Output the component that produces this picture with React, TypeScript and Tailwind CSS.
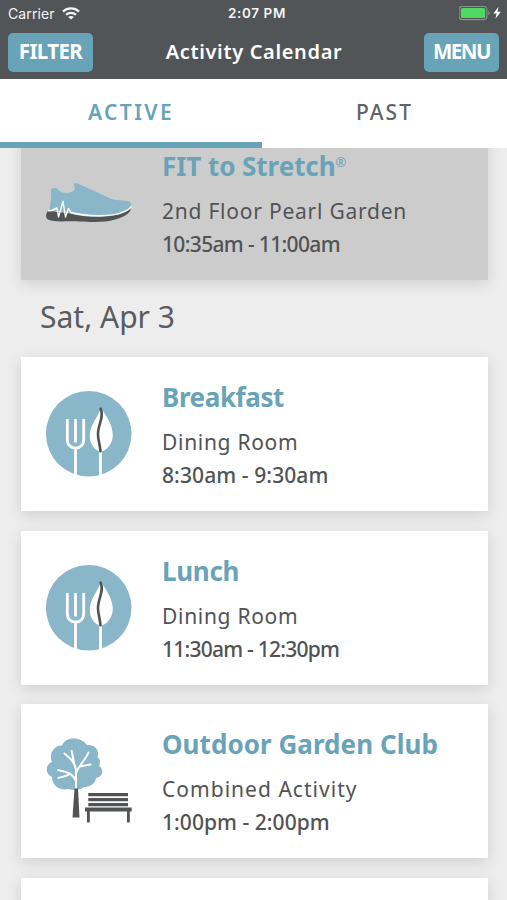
import { useState } from 'react';
import clsx from 'clsx';

function WifiIcon() {
  return (
    <svg viewBox="0 0 18 13" className="h-[13px] w-[18px]" fill="none" stroke="#f4f4f4" strokeWidth="2.2">
      <path d="M1 4.6 C5.4 0.4 12.6 0.4 17 4.6" />
      <path d="M4 7.8 C6.8 5.1 11.2 5.1 14 7.8" />
      <path d="M9 12.5 L6.1 9.9 C7.6 8.6 10.4 8.6 11.9 9.9 Z" fill="#f4f4f4" stroke="none" />
    </svg>
  );
}

function BatteryIcon() {
  return (
    <svg viewBox="0 0 44 15" className="h-[15px] w-[44px]">
      <rect x="0.1" y="0.4" width="27.8" height="13.2" rx="3" fill="none" stroke="#8d8f90" strokeWidth="1.1" />
      <rect x="1.8" y="2" width="24.4" height="10" rx="1.5" fill="#4cd964" />
      <path d="M29.3 4.7 C31.1 5.5 31.1 8.5 29.3 9.3 Z" fill="#8d8f90" />
      <path d="M39.6 0.8 L34.4 7.6 H37.6 L36.4 12.8 L41.8 5.8 H38.4 Z" fill="#fff" />
    </svg>
  );
}

function ShoeIcon() {
  return (
    <svg viewBox="0 0 110 65" className="h-[65px] w-[110px]">
      <path
        d="M20 40 C19 36 22 31 21 22 C20 18 24 17.5 27 18.5 C31 24 40 24.5 44.5 20 C45.5 17.5 43 15.5 44 13.5 C46 12 49 14 51 15 L75 26 C83 31 91 30 98 31 C101 32 102 35 101 37.5 C92 45 80 46 70 46 C58 46 48 44 40 42.5 Z"
        fill="#8ab6ca"
      />
      <path
        d="M18 41 C22 41 24 41 27 42 L38 43 C50 46 60 47 70 47 C85 46 94 44 101 38.5 C100 44 93 47 87 49 C75 53 60 52 50 51.5 C38 50.5 26 53 18 49.5 C15 47.5 16 43 18 41 Z"
        fill="#515355"
      />
      <path
        d="M18 40.5 C21 41 23 40.5 24.5 39 L27 38 L28.5 47 L33 31.5 L35.5 47 L38.5 38.5 L41 42.5 C55 46.5 84 47 93 42 C97 40.5 100 38.5 101.5 36"
        fill="none"
        stroke="#fff"
        strokeWidth="1.4"
        strokeLinejoin="round"
      />
    </svg>
  );
}

function DiningIcon() {
  return (
    <svg viewBox="0 0 110 110" className="h-[110px] w-[110px]">
      <circle cx="53.7" cy="53.8" r="42.8" fill="#8ab6ca" />
      <path
        d="M32.3 39 V59.5 C32.3 71 48.7 71 48.7 59.5 V39 M40.5 39 V62.5 M40.5 68 V95 M65.5 70 V95"
        fill="none"
        stroke="#fff"
        strokeWidth="2.8"
      />
      <path d="M65.8 28 C71 35 77.8 45 77.8 55 C77.8 65 70 71.5 65.8 71.5 C61 71.5 54.8 65 54.8 56 C54.8 45 62 39 65.8 28 Z" fill="#fff" />
      <path
        d="M65.6 28.6 C69.5 37 63 44 63 54 C63 61 65 64 65.5 71.3"
        fill="none"
        stroke="#515355"
        strokeWidth="2.6"
        strokeLinecap="round"
      />
    </svg>
  );
}

function ParkIcon() {
  return (
    <svg viewBox="0 0 110 100" className="h-[100px] w-[110px]">
      <path
        d="M27 15.5 C30 7 45 5.5 52 15 C60 14 65 21 62.5 27 C66 30 65 34 64 36 C70 40 67 47 61 48 C60 55 53 57 49 57 C44 61 36 60 33 59 C25 61 17 56 17 47 C9 43 11 34 17 32 C13 23 20 15 27 15.5 Z"
        fill="#8ab6ca"
      />
      <path
        d="M41 60 V40 C40 32 35 28 29.5 23.5 M36.7 21 L39.3 34 M41 43 C45 34 51 29 53.5 22.5 M44.5 36.5 C49 36 52 35 55.5 34.5 M41 51 C38 43 31 42 23 40 M34.5 44 C31 47 27 46.5 23.5 48"
        fill="none"
        stroke="#fff"
        strokeWidth="2"
        strokeLinecap="round"
      />
      <path d="M39.5 58.5 H43 L44.5 87.5 H37.5 Z" fill="#515355" />
      <path
        d="M53.3 63 H93 V66.2 H53.3 Z M53.3 68 H93 V71.2 H53.3 Z M53.3 73 H93 V76.2 H53.3 Z M50 77.6 H96.7 V81.6 H50 Z M52 81 H54.8 V92.5 H52 Z M92 81 H94.8 V92.5 H92 Z"
        fill="#515355"
      />
    </svg>
  );
}

const pastEvent = {
  title: 'FIT to Stretch',
  registered: true,
  location: '2nd Floor Pearl Garden',
  time: '10:35am - 11:00am',
  icon: ShoeIcon,
  iconClass: 'pl-[9.5px] pt-[44px]',
  titleClass: 'tracking-[-0.05px]',
  locationClass: 'tracking-[0.77px]',
  timeClass: 'tracking-[-0.65px]',
};

const events = [
  {
    title: 'Breakfast',
    location: 'Dining Room',
    time: '8:30am - 9:30am',
    icon: DiningIcon,
    iconClass: 'pl-[14.5px] pt-[23px]',
    titleClass: 'tracking-[-0.4px]',
    locationClass: 'tracking-[0.7px]',
    timeClass: 'tracking-[0.1px]',
  },
  {
    title: 'Lunch',
    location: 'Dining Room',
    time: '11:30am - 12:30pm',
    icon: DiningIcon,
    iconClass: 'pl-[14.5px] pt-[23px]',
    titleClass: 'tracking-[-0.3px]',
    locationClass: 'tracking-[0.7px]',
    timeClass: 'tracking-[-0.75px]',
  },
  {
    title: 'Outdoor Garden Club',
    location: 'Combined Activity',
    time: '1:00pm - 2:00pm',
    icon: ParkIcon,
    iconClass: 'pl-[14.5px] pt-[26px]',
    titleClass: 'tracking-[0.05px]',
    locationClass: 'tracking-[1.03px]',
    timeClass: 'tracking-[0.05px]',
  },
];

function EventCard({ event, past = false }: { event: any; past?: boolean }) {
  return (
    <div
      className={clsx(
        'flex h-[154px] w-[467px] shrink-0 shadow-[0_4px_14px_rgba(0,0,0,0.12)]',
        past ? 'bg-[#cccccc]' : 'bg-white'
      )}
    >
      <div className={clsx('w-[141.5px] shrink-0', event.iconClass)}>
        <event.icon />
      </div>
      <div className="whitespace-nowrap pt-[22px] text-[#515355]">
        <h3 className={clsx('text-[26px] font-bold leading-[36px] text-[#68a3b8]', event.titleClass)}>
          {event.title}
          {event.registered && <sup className="top-[-9px] text-[13px] font-normal">®</sup>}
        </h3>
        <p className={clsx('mt-[11px] text-[21px] leading-[32px]', event.locationClass)}>{event.location}</p>
        <p className={clsx('mt-[1px] text-[21px] font-medium leading-[32px]', event.timeClass)}>{event.time}</p>
      </div>
    </div>
  );
}

export default function App() {
  const [activeTab, setActiveTab] = useState('active');

  return (
    <div className="flex h-[900px] w-[507px] flex-col overflow-hidden bg-[#ededed] font-['Noto_Sans',sans-serif]">
      <header className="h-[79px] shrink-0 bg-[#515558] text-white">
        {/* Status bar */}
        <div className="grid h-[27px] grid-cols-3 items-center pl-[8px] pr-[4px] font-['Inter',sans-serif] text-[13px] text-[#f4f4f4]">
          <div className="flex items-center gap-[7px]">
            <span className="text-[14px] tracking-[0.1px]">Carrier</span>
            <WifiIcon />
          </div>
          <span className="pl-[3px] text-center text-[13.5px] font-semibold tracking-[0.6px]">2:07 PM</span>
          <div className="flex justify-end">
            <BatteryIcon />
          </div>
        </div>
        {/* Title bar */}
        <div className="flex items-center justify-between px-[8px] pt-[6px]">
          <button className="h-[39px] w-[85px] rounded-[5px] bg-[#68a3b8] pb-[3px] text-[20.5px] font-bold leading-[36px] tracking-[-0.6px]">
            FILTER
          </button>
          <h1 className="mr-[9px] pb-[2px] text-[20px] font-semibold tracking-[0.65px]">Activity Calendar</h1>
          <button className="h-[39px] w-[75px] rounded-[5px] bg-[#68a3b8] pb-[3px] text-[20.5px] font-bold leading-[36px] tracking-[-1.5px]">
            MENU
          </button>
        </div>
      </header>

      <nav className="z-10 flex h-[69px] shrink-0 bg-white text-[21px] font-medium">
        <button
          onClick={() => setActiveTab('active')}
          className={clsx(
            'w-[262px] border-b-[6px] pt-[4px] font-semibold tracking-[2.4px]',
            activeTab === 'active' ? 'border-[#68a3b8] text-[#68a3b8]' : 'border-transparent text-[#606264]'
          )}
        >
          ACTIVE
        </button>
        <button
          onClick={() => setActiveTab('past')}
          className={clsx(
            'flex-1 border-b-[6px] pt-[4px] tracking-[2px]',
            activeTab === 'past' ? 'border-[#68a3b8] text-[#68a3b8]' : 'border-transparent text-[#606264]'
          )}
        >
          PAST
        </button>
      </nav>

      <main className="flex-1 overflow-hidden pl-[20.5px]">
        <div className="-mt-[22px]">
          <EventCard event={pastEvent} past />
        </div>
        <h2 className="h-[77px] pl-[19.5px] pt-[17px] text-[30px] font-normal leading-[40px] text-[#5a5c5e]">
          Sat, Apr 3
        </h2>
        <div className="flex flex-col gap-[19.5px]">
          {events.map((event) => (
            <EventCard key={event.title} event={event} />
          ))}
          <div className="h-[154px] w-[467px] bg-white shadow-[0_4px_14px_rgba(0,0,0,0.12)]" />
        </div>
      </main>
    </div>
  );
}
